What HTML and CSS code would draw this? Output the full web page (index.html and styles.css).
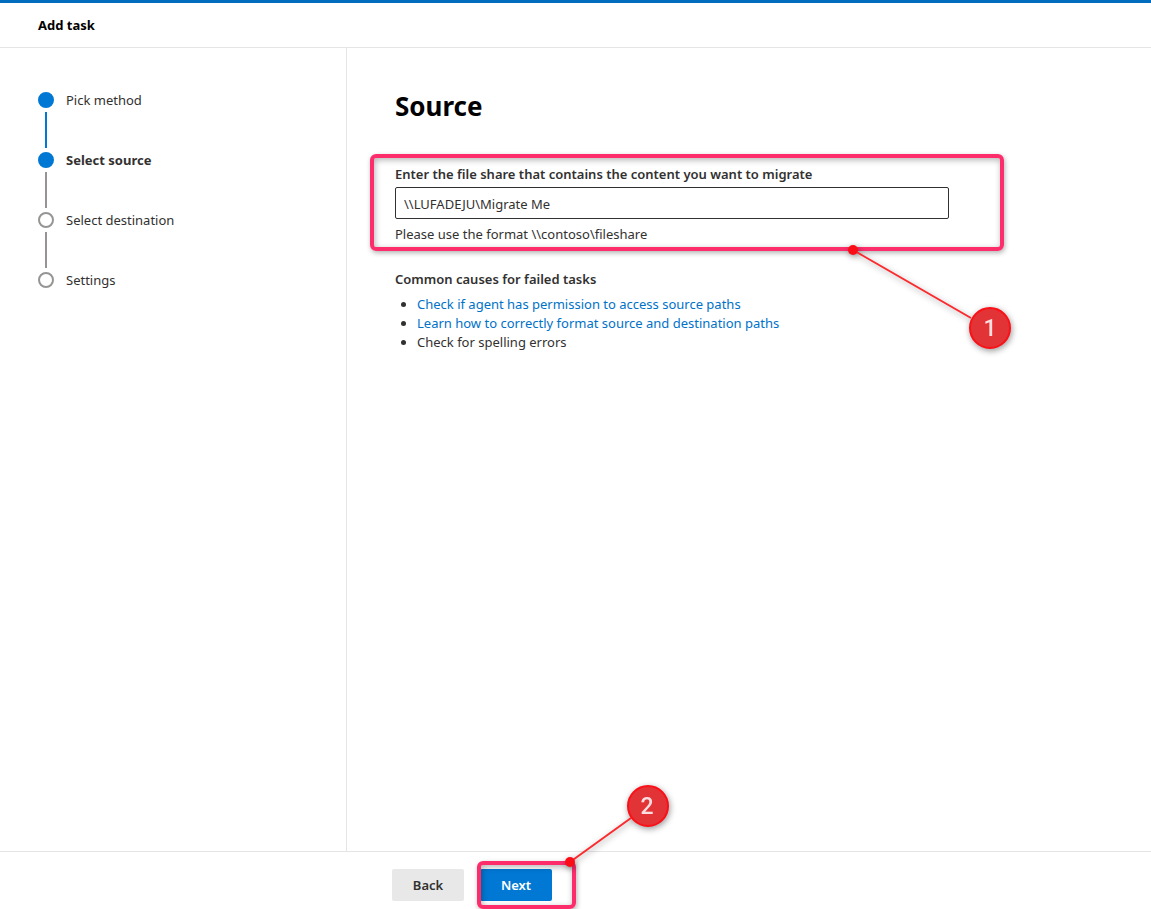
FILE: index.html
```
<!DOCTYPE html>
<html lang="en">
<head>
<meta charset="utf-8">
<meta name="viewport" content="width=device-width, initial-scale=1">
<title>Add task</title>
<link rel="stylesheet" href="styles.css">
</head>
<body>
<header class="topbar"><h2 class="topbar-title">Add task</h2></header>
<div class="body">
  <nav class="sidebar" aria-label="Steps">
    <ol class="steps">
      <li class="step done"><span class="rail"><i class="dot"></i><i class="line"></i></span><span class="step-label">Pick method</span></li>
      <li class="step current" aria-current="step"><span class="rail"><i class="dot"></i><i class="line"></i></span><span class="step-label">Select source</span></li>
      <li class="step"><span class="rail"><i class="dot"></i><i class="line"></i></span><span class="step-label">Select destination</span></li>
      <li class="step"><span class="rail"><i class="dot"></i></span><span class="step-label">Settings</span></li>
    </ol>
  </nav>
  <main class="content">
    <h1 class="title">Source</h1>
    <div class="field">
      <label class="label" for="share">Enter the file share that contains the content you want to migrate</label>
      <input class="input" id="share" type="text" value="\\LUFADEJU\Migrate Me" aria-describedby="hint">
      <p class="hint" id="hint">Please use the format \\contoso\fileshare</p>
      <div class="frame frame-field">
        <svg class="callout callout-one" width="180" height="120" viewBox="0 0 180 120" role="img" aria-label="Step 1">
          <path class="callout-line" d="M12 12 L130 80"/>
          <circle class="callout-end" cx="12" cy="12" r="5"/>
          <circle class="callout-disc" cx="149" cy="90" r="20"/>
          <text class="callout-number" x="149" y="98">1</text>
        </svg>
      </div>
    </div>
    <section class="causes">
      <h3 class="label">Common causes for failed tasks</h3>
      <ul class="cause-list">
        <li><a class="link" href="#permissions">Check if agent has permission to access source paths</a></li>
        <li><a class="link" href="#paths">Learn how to correctly format source and destination paths</a></li>
        <li>Check for spelling errors</li>
      </ul>
    </section>
  </main>
</div>
<footer class="footer">
  <button class="button" type="button">Back</button>
  <div class="next-wrap">
    <button class="button primary" type="button">Next</button>
    <div class="frame frame-next">
      <svg class="callout callout-two" width="130" height="110" viewBox="0 0 130 110" role="img" aria-label="Step 2">
        <path class="callout-line" d="M12 90 L73 46"/>
        <circle class="callout-end" cx="12" cy="90" r="5"/>
        <circle class="callout-disc" cx="90" cy="34" r="20"/>
        <text class="callout-number" x="89" y="42">2</text>
      </svg>
    </div>
  </div>
</footer>
</body>
</html>
```
FILE: styles.css
```
* { box-sizing: border-box; }
body {
  margin: 0;
  min-height: 100vh;
  display: flex;
  flex-direction: column;
  background: #fff;
  color: #323130;
  font: 13px/20px "Segoe UI", "Noto Sans", sans-serif;
}
h1, h2, h3, p, ul, ol { margin: 0; padding: 0; }
.topbar {
  border-top: 3px solid #006cbe;
  border-bottom: 1px solid #e5e5e5;
  padding: 12px 38px;
}
.topbar-title { color: #000; font-size: 13px; font-weight: 700; line-height: 20px; }
.body { flex: 1; display: flex; }
.sidebar { width: 347px; flex-shrink: 0; padding: 42px 38px; border-right: 1px solid #e5e5e5; }
.steps { list-style: none; }
.step { display: flex; gap: 12px; min-height: 60px; }
.rail { width: 16px; padding-top: 2px; display: flex; flex-direction: column; align-items: center; gap: 4px; }
.dot { width: 16px; height: 16px; border: 2px solid #979593; border-radius: 50%; }
.line { width: 2px; height: 36px; background: #979593; }
.done .dot, .current .dot { border-color: #0078d4; background: #0078d4; }
.done .line { background: #0078d4; }
.current .step-label { font-weight: 700; }
.content { flex: 1; padding: 40px 48px; }
.title { color: #000; font-size: 26px; font-weight: 700; line-height: 36px; }
.field { position: relative; max-width: 554px; margin-top: 40px; }
.label { display: block; font-size: 13px; font-weight: 600; line-height: 20px; }
.input {
  width: 100%;
  height: 32px;
  margin-top: 3px;
  padding: 1px 8px 0;
  display: block;
  border: 1px solid #323130;
  border-radius: 2px;
  background: #fff;
  color: inherit;
  font: inherit;
}
.hint { margin-top: 5px; }
.causes { margin-top: 25px; }
.cause-list { margin-top: 6px; padding-left: 22px; line-height: 19px; }
.link { color: #0072c9; text-decoration: none; }
.footer { display: flex; gap: 16px; border-top: 1px solid #e5e5e5; padding: 17px 38px 8px 392px; }
.button {
  width: 72px;
  height: 32px;
  padding: 0;
  border: 0;
  border-radius: 2px;
  background: #e8e8e8;
  color: #323130;
  font: inherit;
  font-weight: 600;
}
.primary { background: #0078d4; color: #fff; }
.next-wrap { position: relative; }
/* Highlight frames and numbered callouts drawn over the form */
.frame {
  position: absolute;
  border: 4px solid #fd2d6c;
  border-radius: 6px;
  pointer-events: none;
  box-shadow: 1px 2px 5px rgba(0, 0, 0, .3), inset 1px 2px 6px rgba(0, 0, 0, .3);
}
.frame-field { inset: -10px -55px -7px -25px; }
.frame-next { inset: -8px -24px -8px -3px; }
.callout { position: absolute; overflow: visible; filter: drop-shadow(1px 2px 3px rgba(0, 0, 0, .4)); }
.callout-one { top: 80px; right: -21px; }
.callout-two { top: -93px; left: 77px; }
.callout-line { fill: none; stroke: #fb2a2e; stroke-width: 2; }
.callout-end { fill: #fb0d18; }
.callout-disc { fill: #e23336; stroke: #fb1017; stroke-width: 2; }
.callout-number { fill: #fbdfe0; font: 500 23px Roboto, "Liberation Sans", sans-serif; text-anchor: middle; }
```
